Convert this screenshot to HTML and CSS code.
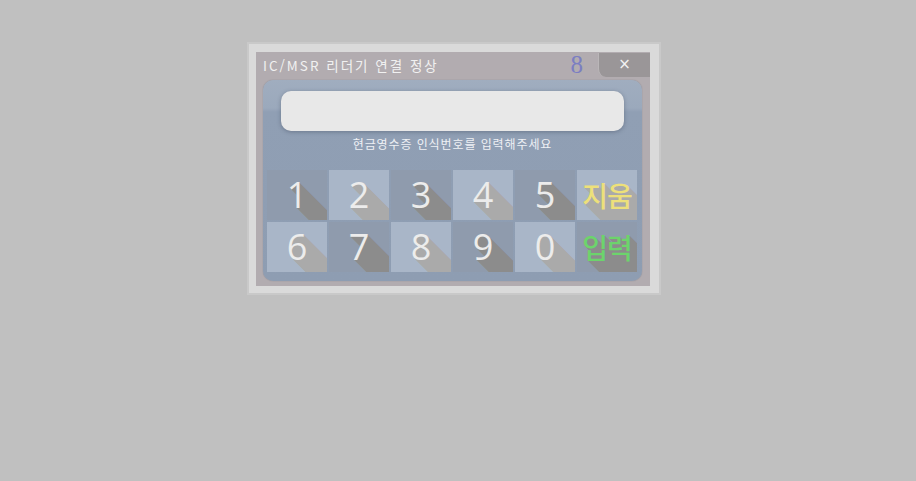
FILE: index.html
```html
<!DOCTYPE html>
<html lang="ko">
<head>
<meta charset="utf-8">
<title>현금영수증</title>
<link rel="stylesheet" href="styles.css">
</head>
<body>
<div class="dialog">
  <div class="inner">
    <div class="titlebar">
      <span class="title">IC/MSR 리더기 연결 정상</span>
      <span class="count">8</span>
      <span class="close">×</span>
    </div>
    <div class="panel">
      <div class="input"></div>
      <div class="hint">현금영수증 인식번호를 입력해주세요</div>
      <div class="keypad">
        <div class="key dark">1</div>
        <div class="key light">2</div>
        <div class="key dark">3</div>
        <div class="key light">4</div>
        <div class="key dark">5</div>
        <div class="key light word clear">지움</div>
        <div class="key light">6</div>
        <div class="key dark">7</div>
        <div class="key light">8</div>
        <div class="key dark">9</div>
        <div class="key light">0</div>
        <div class="key dark word enter">입력</div>
      </div>
    </div>
  </div>
</div>
</body>
</html>
```
FILE: styles.css
```css
html, body {
  margin: 0;
  padding: 0;
  background: #c0c0c0;
  width: 916px;
  height: 481px;
  overflow: hidden;
}

.dialog {
  margin: 42px 0 0 247px;
  width: 394px;
  height: 234px;
  padding: 8px 9px 7px 7px;
  border: 2px solid #c9c9c9;
  background: #dadada;
}

.inner {
  width: 394px;
  height: 234px;
  background: #b2acb0;
  display: flex;
  flex-direction: column;
}

.titlebar {
  height: 26px;
  display: flex;
  align-items: center;
  font-family: "Noto Sans CJK KR", "Noto Sans", sans-serif;
}

.title {
  margin-left: 7px;
  font-size: 13.5px;
  letter-spacing: 2px;
  color: #f1f1f1;
}

.count {
  margin-left: auto;
  margin-right: 15px;
  font-family: "Liberation Serif", serif;
  font-size: 25px;
  line-height: 26px;
  color: #7b7ec2;
}

.close {
  align-self: flex-start;
  margin-top: 1px;
  width: 51px;
  height: 24px;
  background: #9a9698;
  border-left: 1px solid #bab6b8;
  border-bottom-left-radius: 8px;
  color: #f2f2f2;
  font-family: "DejaVu Sans", sans-serif;
  font-size: 15px;
  line-height: 23px;
  text-align: center;
}

.panel {
  margin: 2px 8px 0 7px;
  height: 201px;
  border-radius: 10px;
  background: linear-gradient(#a0adbf 0, #9ba9bc 28px, #909fb4 32px, #8e9db2 100%);
  box-shadow: 0 0 1px rgba(60, 70, 90, 0.5);
  display: flex;
  flex-direction: column;
  align-items: center;
}

.input {
  margin-top: 11px;
  width: 343px;
  height: 40px;
  border-radius: 10px;
  background: #e8e8e8;
  box-shadow: 0 1px 4px rgba(40, 50, 70, 0.35);
}

.hint {
  margin-top: 4px;
  height: 17px;
  font-family: "Noto Sans CJK KR", sans-serif;
  font-size: 12px;
  letter-spacing: 0.9px;
  line-height: 17px;
  color: #eef0f4;
}

.keypad {
  margin-top: 18px;
  margin-left: -1px;
  display: grid;
  grid-template-columns: repeat(6, 60px);
  grid-template-rows: repeat(2, 50px);
  gap: 2px;
}

.key {
  overflow: hidden;
  display: flex;
  align-items: center;
  justify-content: center;
  font-family: "Open Sans", "Noto Sans", sans-serif;
  font-size: 36px;
  line-height: 50px;
  color: #ececec;
  text-shadow: 1px 1px var(--sh), 2px 2px var(--sh), 3px 3px var(--sh), 4px 4px var(--sh), 5px 5px var(--sh),
    6px 6px var(--sh), 7px 7px var(--sh), 8px 8px var(--sh), 9px 9px var(--sh), 10px 10px var(--sh),
    11px 11px var(--sh), 12px 12px var(--sh), 13px 13px var(--sh), 14px 14px var(--sh), 15px 15px var(--sh),
    16px 16px var(--sh), 17px 17px var(--sh), 18px 18px var(--sh), 19px 19px var(--sh), 20px 20px var(--sh),
    21px 21px var(--sh), 22px 22px var(--sh), 23px 23px var(--sh), 24px 24px var(--sh), 25px 25px var(--sh),
    26px 26px var(--sh), 27px 27px var(--sh), 28px 28px var(--sh), 29px 29px var(--sh), 30px 30px var(--sh),
    31px 31px var(--sh), 32px 32px var(--sh), 33px 33px var(--sh), 34px 34px var(--sh), 35px 35px var(--sh),
    36px 36px var(--sh), 37px 37px var(--sh), 38px 38px var(--sh), 39px 39px var(--sh), 40px 40px var(--sh);
}

.dark {
  background: #8f9bad;
  --sh: #8c8c8c;
}

.light {
  background: #a9b6c8;
  --sh: #aaaaaa;
}

.word {
  font-family: "Noto Sans CJK KR", sans-serif;
  font-size: 28px;
  font-weight: 500;
  letter-spacing: -1px;
}

.clear {
  color: #ede07a;
}

.enter {
  color: #6cd46c;
}
```
